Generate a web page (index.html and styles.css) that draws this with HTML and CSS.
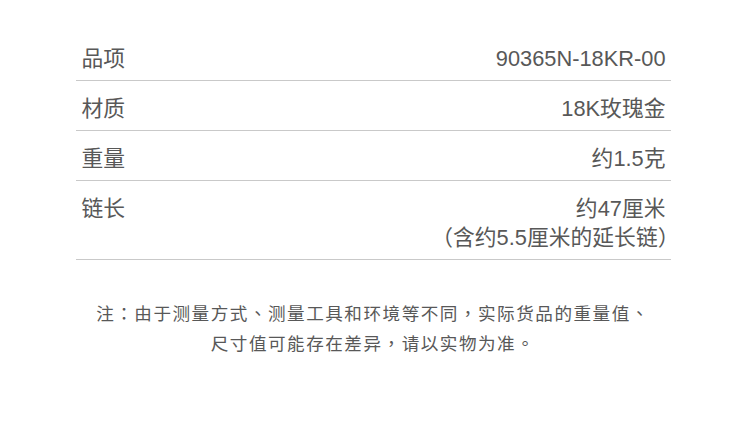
FILE: index.html
```html
<!DOCTYPE html>
<html lang="zh-CN">
<head>
    <meta charset="UTF-8">
    <meta name="viewport" content="width=device-width, initial-scale=1.0">
    <title>产品参数</title>
    <link rel="stylesheet" href="styles.css">
</head>
<body>
    <div class="container">
        <div class="spec-table">
            <div class="spec-row">
                <div class="spec-label">品项</div>
                <div class="spec-value">90365N-18KR-00</div>
            </div>
            <div class="spec-row">
                <div class="spec-label">材质</div>
                <div class="spec-value">18K玫瑰金</div>
            </div>
            <div class="spec-row">
                <div class="spec-label">重量</div>
                <div class="spec-value">约1.5克</div>
            </div>
            <div class="spec-row">
                <div class="spec-label">链长</div>
                <div class="spec-value">
                    <div>约47厘米</div>
                    <div class="paren-line">（含约5.5厘米的延长链）</div>
                </div>
            </div>
        </div>

        <p class="note" lang="zh-Hant">注：由于测量方式、测量工具和环境等不同，实际货品的重量值、<br>尺寸值可能存在差异，请以实物为准。</p>
    </div>
</body>
</html>
```

FILE: styles.css
```css
body {
    margin: 0;
    padding: 0;
    background-color: #fff;
    color: #585858;
    font-family: "Liberation Sans", "Noto Sans CJK SC", sans-serif;
    text-spacing-trim: space-all;
}
.container {
    width: 595px;
    margin: 0 auto;
    padding-top: 31px;
    position: relative;
    left: -2px;
}
.spec-row {
    display: flex;
    justify-content: space-between;
    padding: 13px 5px 7px 6px;
    border-bottom: 1px solid #c9c9c9;
    font-size: 21.8px;
    line-height: 29px;
}
.spec-value {
    text-align: right;
    white-space: nowrap;
}
.paren-line {
    transform: translateX(14px);
}
.note {
    margin: 38px -30px 0;
    text-align: center;
    font-size: 17.6px;
    line-height: 30px;
    letter-spacing: 1.5px;
    font-family: "Noto Sans CJK TC", sans-serif;
    white-space: nowrap;
}
```
